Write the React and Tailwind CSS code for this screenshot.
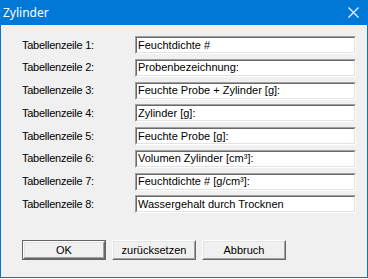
import React from "react";

const rows = [
  ["Tabellenzeile 1:", "Feuchtdichte #"],
  ["Tabellenzeile 2:", "Probenbezeichnung:"],
  ["Tabellenzeile 3:", "Feuchte Probe + Zylinder [g]:"],
  ["Tabellenzeile 4:", "Zylinder [g]:"],
  ["Tabellenzeile 5:", "Feuchte Probe [g]:"],
  ["Tabellenzeile 6:", "Volumen Zylinder [cm³]:"],
  ["Tabellenzeile 7:", "Feuchtdichte # [g/cm³]:"],
  ["Tabellenzeile 8:", "Wassergehalt durch Trocknen"],
];

function Field({ value }) {
  return (
    <div className="w-[221px] h-[18px] border border-t-[#a0a0a0] border-l-[#a0a0a0] border-b-white border-r-white">
      <div className="w-full h-full border border-t-[#696969] border-l-[#696969] border-b-[#e3e3e3] border-r-[#e3e3e3] bg-white flex items-center pl-[1px] text-[11px] leading-none text-black whitespace-nowrap overflow-hidden">
        {value}
      </div>
    </div>
  );
}

function Button({ children, isDefault }) {
  const inner = (
    <div className="w-full h-full border border-t-white border-l-white border-b-[#696969] border-r-[#696969]">
      <div className="w-full h-full border border-t-[#e3e3e3] border-l-[#e3e3e3] border-b-[#a0a0a0] border-r-[#a0a0a0] bg-[#f0f0f0] flex items-center justify-center text-[11px] leading-none text-black">
        {children}
      </div>
    </div>
  );
  return (
    <div className={"w-[84px] h-[20px] " + (isDefault ? "border border-[#646464]" : "")}>
      {inner}
    </div>
  );
}

export default function App() {
  return (
    <div className="w-[368px] h-[279px] bg-white" style={{ fontFamily: '"Liberation Sans", Arial, sans-serif' }}>
      <div className="w-[368px] h-[278px] flex flex-col border-x border-b border-[#0078d7] bg-[#f0f0f0]">
        <div className="h-[25px] bg-[#0078d7] flex items-center justify-between pl-[3px] pr-[9px] -mx-[1px]">
          <span className="text-white text-[12px] leading-none" style={{ fontFamily: '"Noto Sans", "Open Sans", sans-serif' }}>
            Zylinder
          </span>
          <svg width="11" height="11" viewBox="0 0 11 11">
            <path d="M0.5 0.5 L10.5 10.5 M10.5 0.5 L0.5 10.5" stroke="white" strokeWidth="1.1" fill="none" />
          </svg>
        </div>
        <div className="flex flex-col pt-[11px] pl-[21px]">
          <div className="flex flex-col gap-[4.75px]">
            {rows.map(([label, value]) => (
              <div key={label} className="flex items-center h-[18px]">
                <div className="w-[113px] text-[11px] leading-none text-black tracking-[-0.25px] whitespace-nowrap">
                  {label}
                </div>
                <Field value={value} />
              </div>
            ))}
          </div>
          <div className="flex gap-[6px] mt-[27px]">
            <Button isDefault>OK</Button>
            <Button>zurücksetzen</Button>
            <Button>Abbruch</Button>
          </div>
        </div>
      </div>
    </div>
  );
}
